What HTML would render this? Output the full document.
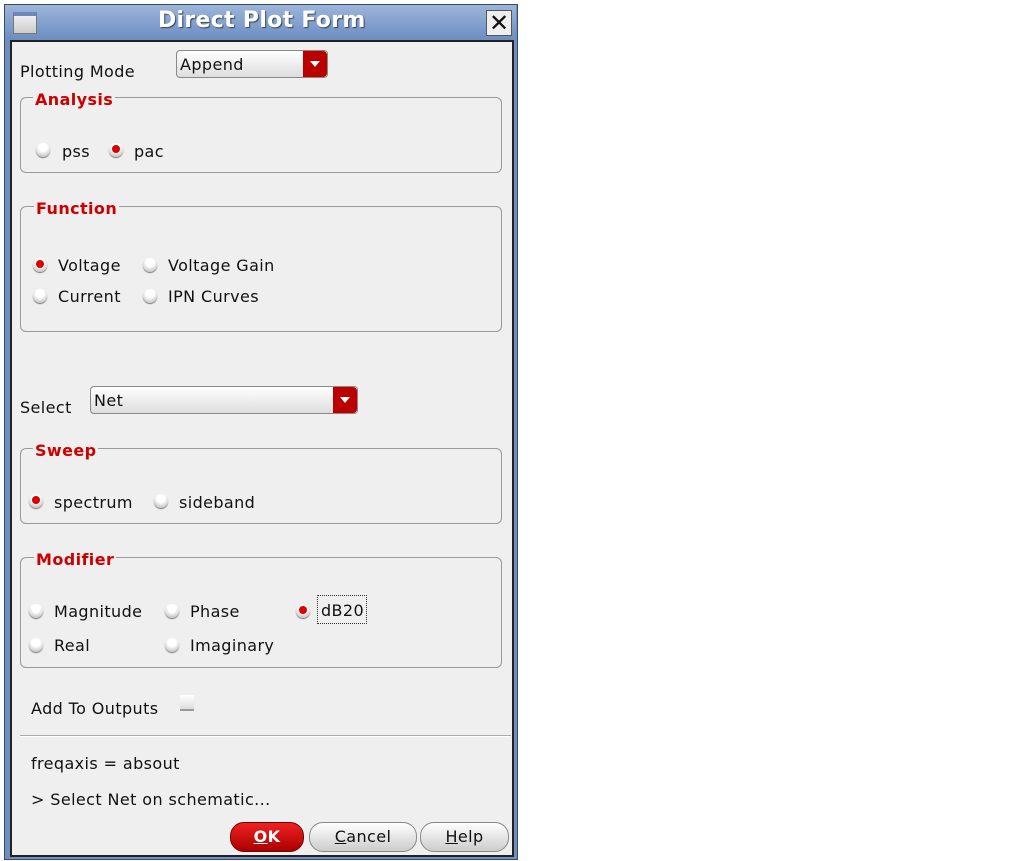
<html><head><style>
body{margin:0;width:1013px;height:861px;background:#fff;font-family:"DejaVu Sans","Liberation Sans",sans-serif;font-size:16px;letter-spacing:0.4px;color:#111;position:relative;overflow:hidden}
.a{position:absolute;white-space:nowrap}
.win{position:absolute;left:4px;top:4px;width:512px;height:854px;background:#6f8fbf;border:1px solid #3a4a6a}
.title{position:absolute;left:5px;top:5px;width:511px;height:34px;background:linear-gradient(#9db5d9,#6d8ec2)}
.body{position:absolute;left:10px;top:40px;width:500px;height:813px;background:#efefef;border:2px solid #222}
.grp{position:absolute;left:20px;width:480px;border:1px solid #999;border-radius:6px}
.lg{position:absolute;color:#c00;font-weight:bold;background:#efefef;padding:0 2px}
.r{position:absolute;width:14px;height:14px;border-radius:50%;background:radial-gradient(circle at 50% 30%,#fff 35%,#aaa 100%);box-shadow:0 1px 1px #777}
.r.on::after{content:"";position:absolute;left:3px;top:2px;width:8px;height:8px;border-radius:50%;background:#d00}
.dd{position:absolute;height:26px;border:1px solid #888;border-radius:4px;background:linear-gradient(#fff,#ddd)}
.dd .ar{position:absolute;right:0;top:0;width:24px;height:26px;background:#b00;border-radius:0 4px 4px 0}
.dd .ar::after{content:"";position:absolute;left:7px;top:10px;border:5px solid transparent;border-top:6px solid #fff}
.btn{position:absolute;top:822px;height:28px;border:1px solid #888;border-radius:14px;background:linear-gradient(#fff,#ccc);text-align:center;line-height:28px}
</style></head><body>
<div class="win"></div>
<div class="title"></div>
<div class="a" style="left:13px;top:12px;width:22px;height:17px;background:linear-gradient(#eee,#ccc);border:1px solid #777;border-top:4px solid #6a88b8"></div>
<div class="a" style="left:158px;top:8px;font-size:22px;font-weight:bold;color:#fff;text-shadow:1px 1px 1px #345;letter-spacing:0.3px">Direct Plot Form</div>
<div class="a" style="left:486px;top:10px;width:24px;height:24px;background:#eee;border:1px solid #555;font-size:24px;line-height:24px;text-align:center;font-weight:bold;letter-spacing:0">✕</div>
<div class="body"></div>

<div class="a" style="left:20px;top:62px">Plotting Mode</div>
<div class="dd" style="left:176px;top:50px;width:150px"><span class="a" style="left:3px;top:4px">Append</span><div class="ar"></div></div>

<div class="grp" style="top:97px;height:74px"></div><div class="lg" style="left:33px;top:90px">Analysis</div>
<div class="r" style="left:36px;top:143px"></div><div class="a" style="left:62px;top:142px">pss</div>
<div class="r on" style="left:109px;top:143px"></div><div class="a" style="left:134px;top:142px">pac</div>

<div class="grp" style="top:206px;height:124px"></div><div class="lg" style="left:34px;top:199px">Function</div>
<div class="r on" style="left:33px;top:258px"></div><div class="a" style="left:58px;top:256px">Voltage</div>
<div class="r" style="left:143px;top:258px"></div><div class="a" style="left:168px;top:256px">Voltage Gain</div>
<div class="r" style="left:33px;top:289px"></div><div class="a" style="left:58px;top:287px">Current</div>
<div class="r" style="left:143px;top:289px"></div><div class="a" style="left:168px;top:287px">IPN Curves</div>

<div class="a" style="left:20px;top:398px">Select</div>
<div class="dd" style="left:90px;top:386px;width:266px"><span class="a" style="left:3px;top:4px">Net</span><div class="ar"></div></div>

<div class="grp" style="top:448px;height:74px"></div><div class="lg" style="left:33px;top:441px">Sweep</div>
<div class="r on" style="left:29px;top:494px"></div><div class="a" style="left:54px;top:493px">spectrum</div>
<div class="r" style="left:154px;top:494px"></div><div class="a" style="left:179px;top:493px">sideband</div>

<div class="grp" style="top:557px;height:109px"></div><div class="lg" style="left:34px;top:550px">Modifier</div>
<div class="r" style="left:29px;top:604px"></div><div class="a" style="left:54px;top:602px">Magnitude</div>
<div class="r" style="left:165px;top:604px"></div><div class="a" style="left:190px;top:602px">Phase</div>
<div class="r on" style="left:296px;top:604px"></div><div class="a" style="left:317px;top:595px;border:1px dotted #333;padding:5px 2px 3px 3px">dB20</div>
<div class="r" style="left:29px;top:638px"></div><div class="a" style="left:54px;top:636px">Real</div>
<div class="r" style="left:165px;top:638px"></div><div class="a" style="left:190px;top:636px">Imaginary</div>

<div class="a" style="left:31px;top:699px">Add To Outputs</div>
<div class="a" style="left:180px;top:695px;width:14px;height:14px;background:linear-gradient(#fff,#ddd);border-bottom:2px solid #999"></div>
<div class="a" style="left:20px;top:735px;width:491px;height:1px;background:#aaa;border-bottom:1px solid #fff"></div>
<div class="a" style="left:31px;top:754px">freqaxis = absout</div>
<div class="a" style="left:31px;top:790px">&gt; Select Net on schematic...</div>

<div class="btn" style="left:230px;width:72px;background:linear-gradient(#e22,#a00);color:#fff;font-weight:bold;border-color:#700"><u>O</u>K</div>
<div class="btn" style="left:309px;width:106px"><u>C</u>ancel</div>
<div class="btn" style="left:420px;width:87px"><u>H</u>elp</div>
</body></html>
